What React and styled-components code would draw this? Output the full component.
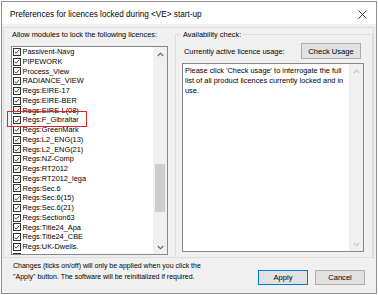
import React from 'react';
import styled, { createGlobalStyle } from 'styled-components';

const GlobalStyle = createGlobalStyle`
    html, body {
        margin: 0;
        padding: 0;
        background: #ffffff;
    }
    * {
        box-sizing: border-box;
    }
`;

const Window = styled.div`
    position: relative;
    width: 376px;
    height: 293px;
    margin: 1px;
    border: 1px solid #8f8f8f;
    background: #f0f0f0;
    display: flex;
    flex-direction: column;
    font-family: "Liberation Sans", Arial, sans-serif;
    font-size: 7.4px;
    color: #000;
`;

const TitleBar = styled.div`
    height: 22px;
    flex: none;
    background: #ffffff;
    display: flex;
    align-items: center;
    justify-content: space-between;
    padding: 3px 9px 0 8px;
    font-size: 8.2px;
`;

const Body = styled.div`
    flex: 1;
    display: flex;
    flex-direction: column;
    padding: 3px 2px 0 1px;
`;

const MainPanel = styled.div`
    height: 231px;
    display: flex;
    border: 1px solid #dcdcdc;
    padding: 0 0 0 7px;
`;

const LeftColumn = styled.div`
    width: 157px;
    display: flex;
    flex-direction: column;
`;

const Label = styled.div`
    line-height: 10px;
    height: 10px;
    margin: 2px 0 6px 1px;
    white-space: nowrap;
`;

const ListBox = styled.div`
    position: relative;
    height: 209px;
    background: #fff;
    border: 1px solid #828790;
    overflow: hidden;
    display: flex;
`;

const Items = styled.div`
    flex: 1;
    padding-left: 1px;
`;

const Row = styled.div`
    height: 9.75px;
    display: flex;
    align-items: center;
    white-space: nowrap;
    line-height: 9.75px;
`;

const Box = styled.span`
    width: 8px;
    height: 8px;
    border: 1px solid #333;
    background: #fff;
    margin-right: 1.5px;
    display: inline-flex;
    align-items: center;
    justify-content: center;
    flex: none;
`;

const ScrollBar = styled.div`
    width: 14px;
    flex: none;
    background: #f0f0f0;
    display: flex;
    flex-direction: column;
    align-items: center;
`;

const Arrow = styled.div`
    height: 14px;
    width: 14px;
    display: flex;
    align-items: center;
    justify-content: center;
    color: ${p => (p.$disabled ? '#c4c4c4' : '#606060')};
`;

const Track = styled.div`
    flex: 1;
    width: 100%;
    display: flex;
    flex-direction: column;
    align-items: center;
`;

const Thumb = styled.div`
    width: 10px;
    background: #cdcdcd;
`;

const GroupBox = styled.div`
    position: relative;
    flex: 1;
    margin: 6px 0 0 7px;
    border: 1px solid #dcdcdc;
    border-bottom: none;
    padding: 8px 8px 5px 6px;
    display: flex;
    flex-direction: column;
`;

const Legend = styled.span`
    position: absolute;
    top: -5px;
    left: 5px;
    padding: 0 2px;
    background: #f0f0f0;
    line-height: 10px;
`;

const UsageRow = styled.div`
    display: flex;
    align-items: center;
    justify-content: space-between;
    padding-left: 2px;
    margin-right: 3px;
`;

const Button = styled.div`
    width: ${p => p.$width || 50}px;
    height: 15px;
    background: #e1e1e1;
    border: 1px solid ${p => (p.$default ? '#0078d7' : '#adadad')};
    display: flex;
    align-items: center;
    justify-content: center;
    font-size: 7.6px;
`;

const TextArea = styled.div`
    flex: 1;
    margin-top: 4px;
    background: #fff;
    border: 1px solid #828790;
    display: flex;
`;

const TextContent = styled.div`
    flex: 1;
    padding: 2px 2px 0 2px;
    line-height: 10px;
`;

const Footer = styled.div`
    flex: 1;
    display: flex;
    justify-content: space-between;
    padding: 2px 9px 0 10px;
`;

const Note = styled.div`
    line-height: 11px;
    font-size: 7px;
    white-space: nowrap;
`;

const Buttons = styled.div`
    display: flex;
    gap: 7px;
    margin-top: 10px;
`;

const Highlight = styled.div`
    position: absolute;
    left: 5px;
    top: 109px;
    width: 80px;
    height: 16px;
    border: 1.5px solid #e0232a;
`;

const items = [
    'Passivent-Navg', 'PIPEWORK', 'Process_View', 'RADIANCE_VIEW', 'Regs:EIRE-17',
    'Regs:EIRE-BER', 'Regs:EIRE-L(08)', 'Regs:F_Gibraltar', 'Regs:GreenMark',
    'Regs:L2_ENG(13)', 'Regs:L2_ENG(21)', 'Regs:NZ-Comp', 'Regs:RT2012',
    'Regs:RT2012_lega', 'Regs:Sec.6', 'Regs:Sec.6(15)', 'Regs:Sec.6(21)',
    'Regs:Section63', 'Regs:Title24_Apa', 'Regs:Title24_CBE', 'Regs:UK-Dwells.',
    'Regs:UK-EPCs',
];

const Check = () => (
    <svg width="7" height="7" viewBox="0 0 7 7">
        <polyline points="0.8,3.6 2.6,5.4 6.2,1.4" fill="none" stroke="#222" strokeWidth="1" />
    </svg>
);

const Chevron = ({ up }) => (
    <svg width="7" height="5" viewBox="0 0 7 5">
        <polyline
            points={up ? '0.8,4 3.5,1.2 6.2,4' : '0.8,1 3.5,3.8 6.2,1'}
            fill="none"
            stroke="currentColor"
            strokeWidth="1.1"
        />
    </svg>
);

const CloseIcon = () => (
    <svg width="9" height="9" viewBox="0 0 9 9">
        <path d="M0.5 0.5 L8.5 8.5 M8.5 0.5 L0.5 8.5" stroke="#222" strokeWidth="0.9" />
    </svg>
);

export default function App() {
    return (
        <Window>
            <GlobalStyle />
            <TitleBar>
                <span>Preferences for licences locked during &lt;VE&gt; start-up</span>
                <CloseIcon />
            </TitleBar>
            <Body>
                <MainPanel>
                    <LeftColumn>
                        <Label>Allow modules to lock the following licences:</Label>
                        <ListBox>
                            <Items>
                                {items.map(name => (
                                    <Row key={name}>
                                        <Box><Check /></Box>
                                        {name}
                                    </Row>
                                ))}
                            </Items>
                            <ScrollBar>
                                <Arrow><Chevron up /></Arrow>
                                <Track>
                                    <div style={{ height: 103 }} />
                                    <Thumb style={{ height: 48 }} />
                                </Track>
                                <Arrow><Chevron /></Arrow>
                            </ScrollBar>
                        </ListBox>
                    </LeftColumn>
                    <GroupBox>
                        <Legend>Availability check:</Legend>
                        <UsageRow>
                            <span>Currently active licence usage:</span>
                            <Button $width={60} style={{ height: 16 }}>Check Usage</Button>
                        </UsageRow>
                        <TextArea>
                            <TextContent>
                                Please click 'Check usage' to interrogate the full<br />
                                list of all product licences currently locked and in<br />
                                use.
                            </TextContent>
                            <ScrollBar>
                                <Arrow $disabled><Chevron up /></Arrow>
                                <Track />
                                <Arrow $disabled><Chevron /></Arrow>
                            </ScrollBar>
                        </TextArea>
                    </GroupBox>
                </MainPanel>
                <Footer>
                    <Note>
                        Changes (ticks on/off) will only be applied when you click the<br />
                        "Apply" button. The software will be reinitialized if required.
                    </Note>
                    <Buttons>
                        <Button $default>Apply</Button>
                        <Button>Cancel</Button>
                    </Buttons>
                </Footer>
            </Body>
            <Highlight />
        </Window>
    );
}
